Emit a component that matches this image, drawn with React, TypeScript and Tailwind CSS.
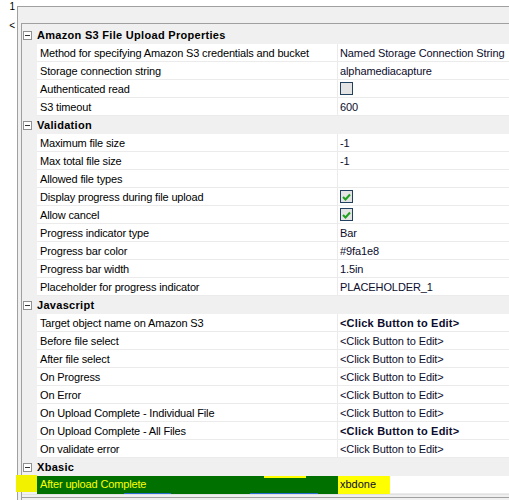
import React from "react";

type Row = { name: string; value?: string; bold?: boolean; check?: boolean; checked?: boolean };
type Section = { title: string; rows: Row[] };

const click = "<Click Button to Edit>";

const sections: Section[] = [
  {
    title: "Amazon S3 File Upload Properties",
    rows: [
      { name: "Method for specifying Amazon S3 credentials and bucket", value: "Named Storage Connection String" },
      { name: "Storage connection string", value: "alphamediacapture" },
      { name: "Authenticated read", check: true, checked: false },
      { name: "S3 timeout", value: "600" },
    ],
  },
  {
    title: "Validation",
    rows: [
      { name: "Maximum file size", value: "-1" },
      { name: "Max total file size", value: "-1" },
      { name: "Allowed file types", value: "" },
      { name: "Display progress during file upload", check: true, checked: true },
      { name: "Allow cancel", check: true, checked: true },
      { name: "Progress indicator type", value: "Bar" },
      { name: "Progress bar color", value: "#9fa1e8" },
      { name: "Progress bar width", value: "1.5in" },
      { name: "Placeholder for progress indicator", value: "PLACEHOLDER_1" },
    ],
  },
  {
    title: "Javascript",
    rows: [
      { name: "Target object name on Amazon S3", value: click, bold: true },
      { name: "Before file select", value: click },
      { name: "After file select", value: click },
      { name: "On Progress", value: click },
      { name: "On Error", value: click },
      { name: "On Upload Complete - Individual File", value: click },
      { name: "On Upload Complete - All Files", value: click, bold: true },
      { name: "On validate error", value: click },
    ],
  },
];

function MinusBox() {
  return (
    <div className="w-[9px] h-[9px] border border-[#919191] bg-white flex items-center justify-center shrink-0">
      <div className="w-[5px] h-[1px] bg-[#333]" />
    </div>
  );
}

function CheckBox({ checked }: { checked: boolean }) {
  return (
    <div className="w-[13px] h-[13px] border border-[#22405f] bg-[#e4e4e4] flex items-center justify-center">
      {checked && (
        <svg width="9" height="8" viewBox="0 0 9 8">
          <path d="M1 4 L3.5 6.5 L8 1.5" fill="none" stroke="#1fa01f" strokeWidth="2" />
        </svg>
      )}
    </div>
  );
}

function Header({ title }: { title: string }) {
  return (
    <div className="h-[18px] flex items-center bg-[#f0f0f0]">
      <div className="w-[15px] flex justify-start pl-[1px]">
        <MinusBox />
      </div>
      <span className="font-bold text-[11px] tracking-[0.3px] text-black leading-[18px]">{title}</span>
    </div>
  );
}

function DataRow({ row }: { row: Row }) {
  return (
    <div className="h-[18px] flex">
      <div className="w-[15px] bg-[#f0f0f0] shrink-0" />
      <div className="w-[301px] shrink-0 bg-white border-r border-b border-[#ebebeb] pl-[3px] leading-[18px] tracking-[-0.15px] text-black whitespace-nowrap overflow-hidden">
        {row.name}
      </div>
      <div className="flex-1 bg-white border-b border-[#ebebeb] pl-[2px] leading-[18px] tracking-[-0.1px] text-[#0c0c2c] whitespace-nowrap overflow-hidden flex items-center">
        {row.check ? (
          <CheckBox checked={!!row.checked} />
        ) : (
          <span className={row.bold ? "font-bold tracking-[0.2px]" : ""}>{row.value}</span>
        )}
      </div>
    </div>
  );
}

export default function App() {
  return (
    <div
      className="w-[509px] h-[500px] bg-white flex overflow-hidden relative text-[11px]"
      style={{ fontFamily: '"Liberation Sans", Arial, sans-serif' }}
    >
      <div className="w-[17px] shrink-0 flex flex-col items-end pr-[2px] text-[10px] leading-[10px] text-black">
        <span className="mt-[2px]">1</span>
        <span className="mt-[9px]">&lt;</span>
      </div>
      <div className="flex-1 mt-[6px] border-l border-t border-[#a0a0a0] bg-[#f0f0f0] pl-[3px] pt-[16px]">
        <div className="border-l border-t border-[#a0a0a0] pt-[2px]">
          {sections.map((s) => (
            <div key={s.title}>
              <Header title={s.title} />
              {s.rows.map((r) => (
                <DataRow key={r.name} row={r} />
              ))}
            </div>
          ))}
          <Header title="Xbasic" />
          <div className="h-[18px] flex relative">
            <div className="w-[15px] shrink-0 bg-[#f0f0f0]" />
            <div className="w-[301px] shrink-0 bg-[#007000] pl-[3px] leading-[17px] tracking-[-0.15px] text-[#ffff00] whitespace-nowrap relative">
              After upload Complete
              <div className="absolute top-0 left-[227px] w-[42px] h-[2px] bg-[#ffff00]" />
              <div className="absolute bottom-0 left-[87px] w-[47px] h-[1px] bg-[#2a6fd0]" />
              <div className="absolute bottom-0 left-[213px] w-[68px] h-[1px] bg-[#2a6fd0]" />
            </div>
            <div className="flex-1 bg-white leading-[17px] text-[#0c0c2c] border-b border-[#ebebeb]">
              <span className="inline-block bg-[#ffff00] pl-[2px] w-[52px] h-[18px]">xbdone</span>
            </div>
          </div>
          <div className="h-[3px] border-t border-[#e2e2e2]" />
          <div className="border-t border-[#a0a0a0] h-[10px]" />
        </div>
      </div>
      <div className="absolute left-[16px] top-[475px] w-[21px] h-[17px] bg-[#f2f200]" />
    </div>
  );
}
